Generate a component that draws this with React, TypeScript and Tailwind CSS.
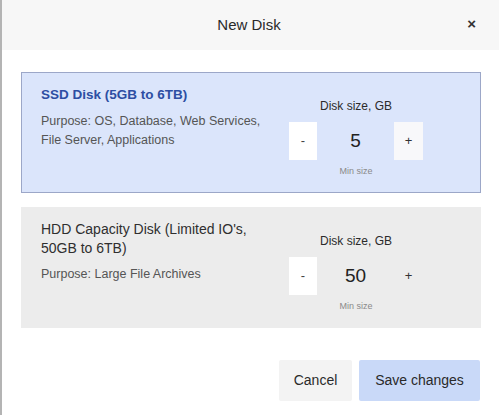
import { useState } from "react";

type DiskOption = {
  id: string;
  title: string;
  purpose: string;
  min: number;
};

const disks: DiskOption[] = [
  { id: "ssd", title: "SSD Disk (5GB to 6TB)", purpose: "Purpose: OS, Database, Web Services, File Server, Applications", min: 5 },
  { id: "hdd", title: "HDD Capacity Disk (Limited IO's, 50GB to 6TB)", purpose: "Purpose: Large File Archives", min: 50 },
];

function Stepper({ value, active }: { value: number; active: boolean }) {
  return (
    <div className="flex flex-col items-center">
      <span className="text-[12px] text-[#2b2b2b] leading-[16px]">Disk size, GB</span>
      <div className="flex flex-row mt-[8px] h-[38px]">
        <button className="w-[28px] h-full bg-white text-[13px] text-[#444]">-</button>
        <div className="w-[77px] h-full flex items-center justify-center text-[19px] text-[#222]">{value}</div>
        <button className={`w-[29px] h-full text-[13px] text-[#333] ${active ? "bg-[#f8f8fa]" : ""}`}>+</button>
      </div>
      <span className="mt-[5px] text-[9px] text-[#8a8a8a] leading-[12px]">Min size</span>
    </div>
  );
}

export default function App() {
  const [selected] = useState("ssd");

  return (
    <div className="w-[499px] h-[415px] flex flex-row bg-white overflow-hidden font-['Liberation_Sans',Arial,sans-serif]">
      <div className="w-[2px] h-full bg-[#b4b4b4]" />
      <div className="flex-1 flex flex-col">
        {/* Header */}
        <div className="h-[50px] bg-[#f7f7f7] flex flex-row items-center relative">
          <h1 className="w-full text-center text-[15px] text-[#2a2a2a] pr-[3px]">New Disk</h1>
          <button className="absolute right-[23px] top-[13px] text-[15px] font-bold text-[#333]">×</button>
        </div>
        {/* Disk options */}
        <div className="flex flex-col gap-[14px] pt-[22px] pl-[19px] pr-[18px]">
          {disks.map((d) => {
            const active = d.id === selected;
            return (
              <div
                key={d.id}
                className={`h-[121px] flex flex-row items-start border ${active ? "bg-[#dbe5fb] border-[#9ca7c8]" : "bg-[#ececec] border-[#ececec]"}`}
              >
                <div className="w-[246px] shrink-0 pl-[19px] pt-[12px]">
                  <h2 className={`leading-[19px] ${active ? "text-[13.5px] text-[#2d4ea3] font-bold" : "text-[14px] text-[#2f2f2f]"}`}>{d.title}</h2>
                  <p className={`${active ? "mt-[8px]" : "mt-[7px]"} text-[12.5px] leading-[19px] text-[#555]`}>{d.purpose}</p>
                </div>
                <div className="ml-[21px] pt-[25px]">
                  <Stepper value={d.min} active={active} />
                </div>
              </div>
            );
          })}
        </div>
        {/* Footer */}
        <div className="flex flex-row justify-end gap-[7px] pr-[19px] mt-[32px]">
          <button className="w-[73px] h-[41px] bg-[#f3f3f3] rounded-[2px] text-[14px] text-[#2a2a2a]">Cancel</button>
          <button className="w-[121px] h-[41px] bg-[#c9d9f8] rounded-[2px] text-[14px] text-[#2a2a2a]">Save changes</button>
        </div>
      </div>
    </div>
  );
}
